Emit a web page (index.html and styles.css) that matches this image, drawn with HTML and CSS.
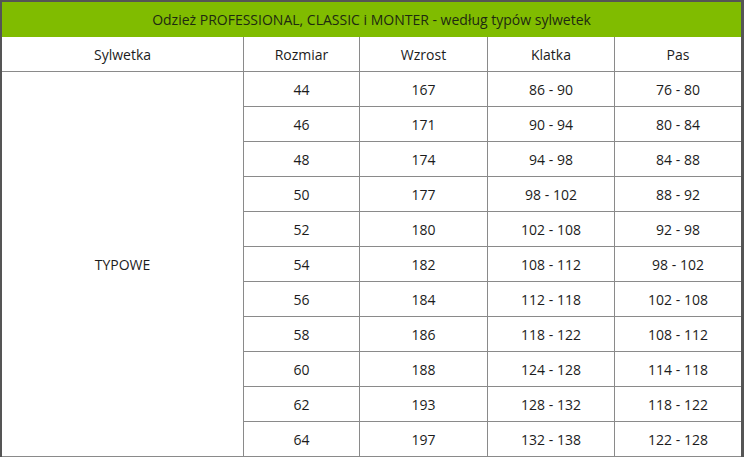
FILE: index.html
```html
<!DOCTYPE html>
<html lang="pl">
<head>
<meta charset="utf-8">
<title>Tabela rozmiarów</title>
<link rel="stylesheet" href="styles.css">
</head>
<body>
<div class="sheet">
  <div class="title">Odzież PROFESSIONAL, CLASSIC i MONTER - według typów sylwetek</div>
  <div class="grid">
    <div class="cell">Sylwetka</div>
    <div class="cell">Rozmiar</div>
    <div class="cell">Wzrost</div>
    <div class="cell">Klatka</div>
    <div class="cell last">Pas</div>

    <div class="cell span">TYPOWE</div>
    <div class="cell">44</div><div class="cell">167</div><div class="cell">86 - 90</div><div class="cell last">76 - 80</div>
    <div class="cell">46</div><div class="cell">171</div><div class="cell">90 - 94</div><div class="cell last">80 - 84</div>
    <div class="cell">48</div><div class="cell">174</div><div class="cell">94 - 98</div><div class="cell last">84 - 88</div>
    <div class="cell">50</div><div class="cell">177</div><div class="cell">98 - 102</div><div class="cell last">88 - 92</div>
    <div class="cell">52</div><div class="cell">180</div><div class="cell">102 - 108</div><div class="cell last">92 - 98</div>
    <div class="cell">54</div><div class="cell">182</div><div class="cell">108 - 112</div><div class="cell last">98 - 102</div>
    <div class="cell">56</div><div class="cell">184</div><div class="cell">112 - 118</div><div class="cell last">102 - 108</div>
    <div class="cell">58</div><div class="cell">186</div><div class="cell">118 - 122</div><div class="cell last">108 - 112</div>
    <div class="cell">60</div><div class="cell">188</div><div class="cell">124 - 128</div><div class="cell last">114 - 118</div>
    <div class="cell">62</div><div class="cell">193</div><div class="cell">128 - 132</div><div class="cell last">118 - 122</div>
    <div class="cell">64</div><div class="cell">197</div><div class="cell">132 - 138</div><div class="cell last">122 - 128</div>
  </div>
</div>
</body>
</html>
```
FILE: styles.css
```css
html, body {
  margin: 0;
  padding: 0;
  background: #ffffff;
}
.sheet {
  width: 744px;
  box-sizing: border-box;
  border-top: 2px solid #555555;
  border-left: 2px solid #555555;
  border-right: 3px solid #555555;
  font-family: "Open Sans", "Noto Sans", sans-serif;
  font-size: 14px;
  color: #1c1c1c;
}
.title {
  height: 35px;
  background: #80bc00;
  display: flex;
  align-items: center;
  justify-content: center;
  color: #1e2a10;
}
.grid {
  display: grid;
  grid-template-columns: 242px 116px 128px 127px 126px;
  grid-auto-rows: 35px;
}
.cell {
  display: flex;
  align-items: center;
  justify-content: center;
  border-bottom: 1px solid #8a8a8a;
  border-right: 1px solid #8a8a8a;
}
.cell.last {
  border-right: none;
}
.span {
  grid-row: span 11;
}
```
